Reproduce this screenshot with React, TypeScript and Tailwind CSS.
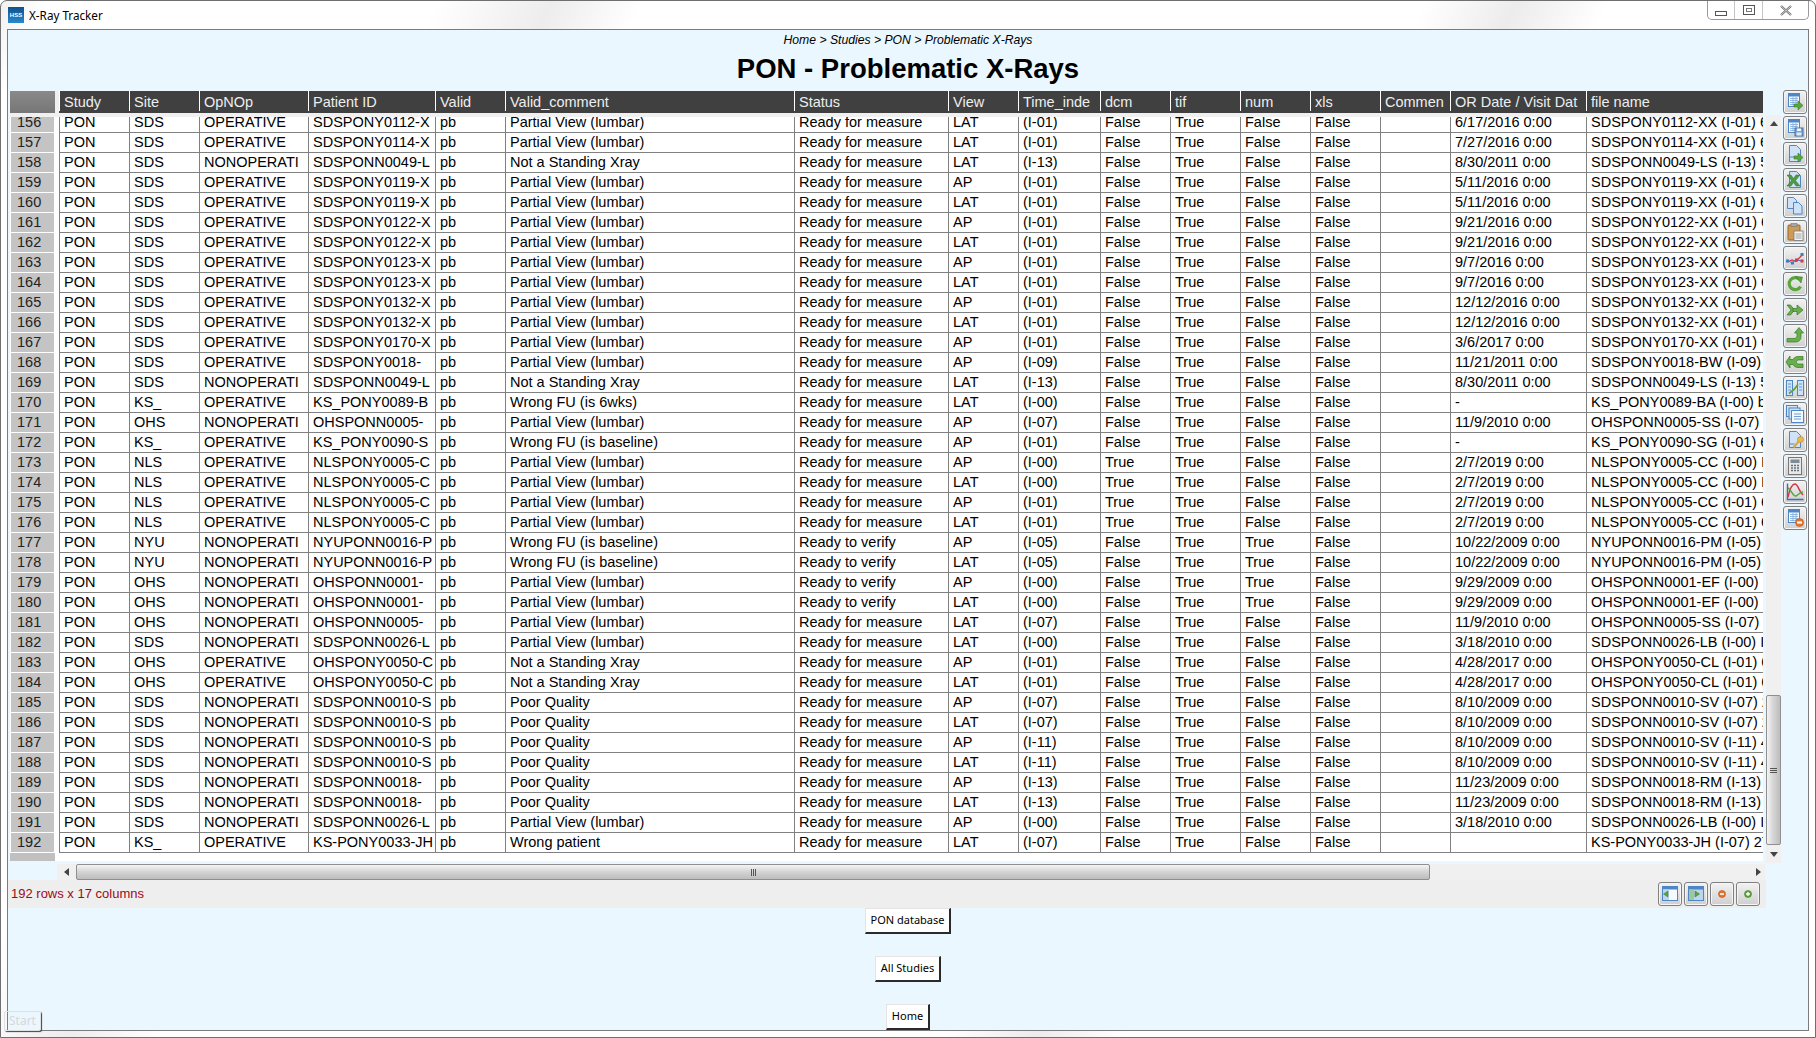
import React from "react";

const ARIAL = { fontFamily: '"Liberation Sans", Arial, sans-serif' };

const columns = [
  { label: "Study", width: "w-[70px]" },
  { label: "Site", width: "w-[70px]" },
  { label: "OpNOp", width: "w-[109px]" },
  { label: "Patient ID", width: "w-[127px]" },
  { label: "Valid", width: "w-[70px]" },
  { label: "Valid_comment", width: "w-[289px]" },
  { label: "Status", width: "w-[154px]" },
  { label: "View", width: "w-[70px]" },
  { label: "Time_inde", width: "w-[82px]" },
  { label: "dcm", width: "w-[70px]" },
  { label: "tif", width: "w-[70px]" },
  { label: "num", width: "w-[70px]" },
  { label: "xls", width: "w-[70px]" },
  { label: "Commen", width: "w-[70px]" },
  { label: "OR Date / Visit Dat", width: "w-[136px]" },
  { label: "file name", width: "w-[177px]" },
];

const PV = "Partial View (lumbar)";
const NS = "Not a Standing Xray";
const BL = "Wrong FU (is baseline)";
const PQ = "Poor Quality";
const RM = "Ready for measure";
const RV = "Ready to verify";
const OP = "OPERATIVE";
const NO = "NONOPERATI";

// site, opnop, patient, comment, status, view, time, dcm, num, date, file
const data: string[][] = [
  ["SDS", OP, "SDSPONY0112-X", PV, RM, "LAT", "(I-01)", "False", "False", "6/17/2016 0:00", "SDSPONY0112-XX (I-01) 6"],
  ["SDS", OP, "SDSPONY0114-X", PV, RM, "LAT", "(I-01)", "False", "False", "7/27/2016 0:00", "SDSPONY0114-XX (I-01) 6"],
  ["SDS", NO, "SDSPONN0049-L", NS, RM, "LAT", "(I-13)", "False", "False", "8/30/2011 0:00", "SDSPONN0049-LS (I-13) 5"],
  ["SDS", OP, "SDSPONY0119-X", PV, RM, "AP", "(I-01)", "False", "False", "5/11/2016 0:00", "SDSPONY0119-XX (I-01) 6"],
  ["SDS", OP, "SDSPONY0119-X", PV, RM, "LAT", "(I-01)", "False", "False", "5/11/2016 0:00", "SDSPONY0119-XX (I-01) 6"],
  ["SDS", OP, "SDSPONY0122-X", PV, RM, "AP", "(I-01)", "False", "False", "9/21/2016 0:00", "SDSPONY0122-XX (I-01) 6"],
  ["SDS", OP, "SDSPONY0122-X", PV, RM, "LAT", "(I-01)", "False", "False", "9/21/2016 0:00", "SDSPONY0122-XX (I-01) 6"],
  ["SDS", OP, "SDSPONY0123-X", PV, RM, "AP", "(I-01)", "False", "False", "9/7/2016 0:00", "SDSPONY0123-XX (I-01) 6"],
  ["SDS", OP, "SDSPONY0123-X", PV, RM, "LAT", "(I-01)", "False", "False", "9/7/2016 0:00", "SDSPONY0123-XX (I-01) 6"],
  ["SDS", OP, "SDSPONY0132-X", PV, RM, "AP", "(I-01)", "False", "False", "12/12/2016 0:00", "SDSPONY0132-XX (I-01) 6"],
  ["SDS", OP, "SDSPONY0132-X", PV, RM, "LAT", "(I-01)", "False", "False", "12/12/2016 0:00", "SDSPONY0132-XX (I-01) 6"],
  ["SDS", OP, "SDSPONY0170-X", PV, RM, "AP", "(I-01)", "False", "False", "3/6/2017 0:00", "SDSPONY0170-XX (I-01) 6"],
  ["SDS", OP, "SDSPONY0018-", PV, RM, "AP", "(I-09)", "False", "False", "11/21/2011 0:00", "SDSPONY0018-BW (I-09)"],
  ["SDS", NO, "SDSPONN0049-L", NS, RM, "LAT", "(I-13)", "False", "False", "8/30/2011 0:00", "SDSPONN0049-LS (I-13) 5"],
  ["KS_", OP, "KS_PONY0089-B", "Wrong FU (is 6wks)", RM, "LAT", "(I-00)", "False", "False", "-", "KS_PONY0089-BA (I-00) b"],
  ["OHS", NO, "OHSPONN0005-", PV, RM, "AP", "(I-07)", "False", "False", "11/9/2010 0:00", "OHSPONN0005-SS (I-07)"],
  ["KS_", OP, "KS_PONY0090-S", BL, RM, "AP", "(I-01)", "False", "False", "-", "KS_PONY0090-SG (I-01) 6"],
  ["NLS", OP, "NLSPONY0005-C", PV, RM, "AP", "(I-00)", "True", "False", "2/7/2019 0:00", "NLSPONY0005-CC (I-00) I"],
  ["NLS", OP, "NLSPONY0005-C", PV, RM, "LAT", "(I-00)", "True", "False", "2/7/2019 0:00", "NLSPONY0005-CC (I-00) I"],
  ["NLS", OP, "NLSPONY0005-C", PV, RM, "AP", "(I-01)", "True", "False", "2/7/2019 0:00", "NLSPONY0005-CC (I-01) 6"],
  ["NLS", OP, "NLSPONY0005-C", PV, RM, "LAT", "(I-01)", "True", "False", "2/7/2019 0:00", "NLSPONY0005-CC (I-01) 6"],
  ["NYU", NO, "NYUPONN0016-P", BL, RV, "AP", "(I-05)", "False", "True", "10/22/2009 0:00", "NYUPONN0016-PM (I-05)"],
  ["NYU", NO, "NYUPONN0016-P", BL, RV, "LAT", "(I-05)", "False", "True", "10/22/2009 0:00", "NYUPONN0016-PM (I-05)"],
  ["OHS", NO, "OHSPONN0001-", PV, RV, "AP", "(I-00)", "False", "True", "9/29/2009 0:00", "OHSPONN0001-EF (I-00)"],
  ["OHS", NO, "OHSPONN0001-", PV, RV, "LAT", "(I-00)", "False", "True", "9/29/2009 0:00", "OHSPONN0001-EF (I-00)"],
  ["OHS", NO, "OHSPONN0005-", PV, RM, "LAT", "(I-07)", "False", "False", "11/9/2010 0:00", "OHSPONN0005-SS (I-07)"],
  ["SDS", NO, "SDSPONN0026-L", PV, RM, "LAT", "(I-00)", "False", "False", "3/18/2010 0:00", "SDSPONN0026-LB (I-00) I"],
  ["OHS", OP, "OHSPONY0050-C", NS, RM, "AP", "(I-01)", "False", "False", "4/28/2017 0:00", "OHSPONY0050-CL (I-01) 6"],
  ["OHS", OP, "OHSPONY0050-C", NS, RM, "LAT", "(I-01)", "False", "False", "4/28/2017 0:00", "OHSPONY0050-CL (I-01) 6"],
  ["SDS", NO, "SDSPONN0010-S", PQ, RM, "AP", "(I-07)", "False", "False", "8/10/2009 0:00", "SDSPONN0010-SV (I-07) 2"],
  ["SDS", NO, "SDSPONN0010-S", PQ, RM, "LAT", "(I-07)", "False", "False", "8/10/2009 0:00", "SDSPONN0010-SV (I-07) 2"],
  ["SDS", NO, "SDSPONN0010-S", PQ, RM, "AP", "(I-11)", "False", "False", "8/10/2009 0:00", "SDSPONN0010-SV (I-11) 4"],
  ["SDS", NO, "SDSPONN0010-S", PQ, RM, "LAT", "(I-11)", "False", "False", "8/10/2009 0:00", "SDSPONN0010-SV (I-11) 4"],
  ["SDS", NO, "SDSPONN0018-", PQ, RM, "AP", "(I-13)", "False", "False", "11/23/2009 0:00", "SDSPONN0018-RM (I-13)"],
  ["SDS", NO, "SDSPONN0018-", PQ, RM, "LAT", "(I-13)", "False", "False", "11/23/2009 0:00", "SDSPONN0018-RM (I-13)"],
  ["SDS", NO, "SDSPONN0026-L", PV, RM, "AP", "(I-00)", "False", "False", "3/18/2010 0:00", "SDSPONN0026-LB (I-00) I"],
  ["KS_", OP, "KS-PONY0033-JH", "Wrong patient", RM, "LAT", "(I-07)", "False", "False", "", "KS-PONY0033-JH (I-07) 2Y"],
];

const BLUE = "#4f86c6";
const PALE = "#cfe2f7";
const GREEN = "#5aa53c";
const DKGREEN = "#357a25";

function Sheet() {
  return (
    <>
      <rect x="3.5" y="1.5" width="11" height="13" fill="#f4f8fc" stroke={BLUE} />
      <rect x="4" y="2" width="10" height="2.5" fill={BLUE} />
      <path d="M5 6.5h8M5 8.5h8M5 10.5h8M5 12.5h8M8 5v8.5M11 5v8.5" stroke="#7fa9d8" strokeWidth="0.8" />
    </>
  );
}

function Page() {
  return <path d="M4.5 1.5h7l4 4v12h-11z" fill={PALE} stroke={BLUE} />;
}

function Arrow() {
  return <path d="M9 12h4V9l5 4.5-5 4.5v-3H9z" fill={GREEN} stroke={DKGREEN} strokeWidth="0.6" />;
}

const toolbarIcons: React.ReactNode[] = [
  <><Sheet /><Arrow /></>,
  <>
    <Sheet />
    <rect x="10" y="10" width="8" height="8" fill="#7aa4d2" stroke="#47709f" />
    <rect x="12" y="10.5" width="4" height="2.5" fill="#eef4fb" />
    <rect x="11.5" y="14.5" width="5" height="3" fill="#dfe9f4" />
  </>,
  <><Page /><path d="M4.5 13h5" stroke={BLUE} /><Arrow /></>,
  <>
    <Page />
    <path d="M2 5h4l2.5 3.5L11 5h4l-4.5 5.5L15 16h-4l-2.5-3.5L6 16H2l4.5-5.5z" fill="#4e9a47" stroke="#2f6e2c" strokeWidth="0.5" />
  </>,
  <>
    <path d="M2.5 1.5h6l3 3v8h-9z" fill={PALE} stroke={BLUE} />
    <path d="M8.5 6.5h5l3.5 3.5v8H8.5z" fill={PALE} stroke={BLUE} />
  </>,
  <>
    <rect x="3" y="3" width="12" height="15" rx="1" fill="#cf9a55" stroke="#96662a" />
    <rect x="6" y="1.5" width="6" height="3" fill="#a8a8a8" stroke="#777" strokeWidth="0.6" />
    <rect x="9" y="9" width="9" height="9.5" fill="#f5f5f5" stroke="#777" strokeWidth="0.8" />
    <path d="M10.5 12h6M10.5 14h6M10.5 16h6" stroke="#888" strokeWidth="0.8" />
  </>,
  <>
    <path d="M2 14l5-2 4 1.5L18 6" stroke="#d8344a" strokeWidth="1.3" fill="none" />
    <path d="M2 12l5 3 4-3 7 1" stroke="#3f7cc4" strokeWidth="1" fill="none" />
    <rect x="1" y="11.5" width="3" height="3" fill="#3f7cc4" />
    <rect x="6" y="13.5" width="3" height="3" fill="#3f7cc4" />
    <rect x="10" y="10.5" width="3" height="3" fill="#d8344a" />
    <rect x="15.5" y="5" width="3" height="3" fill="#3f7cc4" />
    <rect x="15.5" y="11.5" width="3" height="3" fill="#d8344a" />
  </>,
  <>
    <path d="M14.5 5.5A6 6 0 1 0 15.5 12.5" fill="none" stroke={GREEN} strokeWidth="3.2" />
    <path d="M10.5 2.5l7 .5-1.5 6z" fill={GREEN} stroke={DKGREEN} strokeWidth="0.5" />
  </>,
  <>
    <path d="M2 5h3.500l4 5-4 5H2l4-5z" fill="#68ae4b" stroke={DKGREEN} strokeWidth="0.7" />
    <path d="M8 8.500h4V5l6 5-6 5v-3.500H8z" fill="#68ae4b" stroke={DKGREEN} strokeWidth="0.7" />
  </>,
  <>
    <path d="M2 16v-3.500h7c2 0 3-1 3-3V7H9.500L14 1.500 18.500 7H16v3c0 4-2 6-6 6z" fill="#68ae4b" stroke={DKGREEN} strokeWidth="0.7" />
  </>,
  <>
    <path d="M18 4.500h-5c-2 0-4 1-5 3H5V4L1 10l4 6v-3.500h3c1 2 3 3 5 3h5V12h-4.500c-1 0-2-1-2-2s1-2 2-2H18z" fill="#68ae4b" stroke={DKGREEN} strokeWidth="0.7" />
  </>,
  <>
    <rect x="1.5" y="2.5" width="6" height="15" fill={PALE} stroke={BLUE} />
    <rect x="12.5" y="2.5" width="6" height="15" fill={PALE} stroke={BLUE} />
    <path d="M3 6h3M3 9h3M3 12h3M14 6h3M14 9h3M14 12h3" stroke={BLUE} strokeWidth="0.8" />
    <path d="M4 15.500l5-4 4-5" stroke={GREEN} strokeWidth="1.8" fill="none" />
  </>,
  <>
    <rect x="1.5" y="1.5" width="11" height="11" fill={PALE} stroke={BLUE} />
    <rect x="4" y="4" width="11" height="11" fill={PALE} stroke={BLUE} />
    <rect x="6.5" y="6.5" width="12" height="12" fill="#f4f8fc" stroke={BLUE} />
    <path d="M9 10h7M9 12.500h7M9 15h7" stroke={BLUE} strokeWidth="0.8" />
  </>,
  <>
    <Page />
    <path d="M4.500 14h5" stroke={BLUE} />
    <circle cx="15.5" cy="9.5" r="3" fill="#eab84c" stroke="#b5842a" strokeWidth="0.6" />
    <path d="M14 11l-5.500 6.500" stroke="#dba83f" strokeWidth="2.2" />
  </>,
  <>
    <rect x="3.5" y="1.5" width="13" height="17" fill="#e8e8e8" stroke="#777" />
    <rect x="5.5" y="3.5" width="9" height="3.5" fill="#7e8a98" />
    <path d="M6 9.500h2M9 9.500h2M12 9.500h2M6 12h2M9 12h2M12 12h2M6 14.500h2M9 14.500h2M12 14.500h2" stroke="#66707c" strokeWidth="1.4" />
  </>,
  <>
    <path d="M2.500 1.500v16h16" fill="none" stroke="#3f6fb0" strokeWidth="1.4" />
    <path d="M3 15c2-9 4-13 7-13 3 0 4 8 8 11" fill="none" stroke="#d8344a" strokeWidth="1.5" />
    <path d="M3 6c3 1 5 9 8 8 2-1 4-4 7-4" fill="none" stroke={GREEN} strokeWidth="1.5" />
  </>,
  <>
    <Sheet />
    <circle cx="14.5" cy="14.5" r="4" fill="#e8752c" stroke="#b64f14" strokeWidth="0.6" />
    <rect x="12" y="13.5" width="5" height="2" fill="#fff" />
  </>,
];

const pagerIcons: React.ReactNode[] = [
  <>
    <rect x="2.5" y="2.5" width="15" height="14" fill="#f6fafe" stroke={BLUE} />
    <rect x="3" y="3" width="14" height="2.5" fill={BLUE} />
    <rect x="3" y="5.5" width="6" height="10.5" fill="#bcd5ef" />
    <path d="M8 7v6L3.500 10z" fill={GREEN} stroke={DKGREEN} strokeWidth="0.5" />
  </>,
  <>
    <rect x="2.5" y="2.5" width="15" height="14" fill="#bcd5ef" stroke={BLUE} />
    <rect x="3" y="3" width="14" height="2.5" fill={BLUE} />
    <rect x="3" y="5.5" width="5" height="10.5" fill="#9cc89a" />
    <path d="M9 7v6l4.500-3z" fill={GREEN} stroke={DKGREEN} strokeWidth="0.5" />
  </>,
  <>
    <circle cx="10" cy="10" r="3.5" fill="#e8752c" stroke="#b64f14" strokeWidth="0.6" />
    <rect x="8" y="9.3" width="4" height="1.5" fill="#fff" />
  </>,
  <>
    <circle cx="10" cy="10" r="3.5" fill="#5aa53c" stroke="#3d7f2a" strokeWidth="0.6" />
    <path d="M8 10h4M10 8v4" stroke="#fff" strokeWidth="1.3" />
  </>,
];

function ToolButton({ children }: { children: React.ReactNode }) {
  return (
    <div className="flex h-[24px] w-[24px] items-center justify-center rounded-[3px] border border-[#7f7f7f] bg-gradient-to-b from-[#f2f2f2] to-[#cfcfcf] shadow-[inset_0_0_0_1px_#f6f6f6]">
      <svg width="20" height="20" viewBox="0 0 20 20">
        {children}
      </svg>
    </div>
  );
}

function NavButton({ label, width }: { label: string; width: string }) {
  return (
    <div
      className={`${width} flex h-[26px] items-center justify-center border-t border-l border-[#e4e4e4] border-r-2 border-b-2 border-r-[#2a2a2a] border-b-[#2a2a2a] bg-white text-[11px] text-black`}
      style={{ fontFamily: '"Noto Sans", sans-serif' }}
    >
      {label}
    </div>
  );
}

function Grip({ vertical }: { vertical?: boolean }) {
  return (
    <div className={`flex gap-[1px] ${vertical ? "flex-col" : ""}`}>
      {[0, 1, 2].map((i) => (
        <div key={i} className={vertical ? "h-px w-[7px] bg-[#555]" : "h-[7px] w-px bg-[#555]"} />
      ))}
    </div>
  );
}

function DataTable() {
  return (
    <div className="h-[774px] pl-[2px] pt-px">
      <div className="flex h-[22px]">
        <div className="h-[22px] w-[45px] bg-gradient-to-b from-[#8a8a8a] to-[#767676]" />
        <div className="h-[22px] w-[4px] bg-[#f0f0f0]" />
        <div className="flex h-[22px] w-[1704px] bg-[#404040]">
          {columns.map((c) => (
            <div
              key={c.label}
              className={`${c.width} h-[20px] overflow-hidden whitespace-nowrap border-l border-white pl-[4px] text-[14.5px] leading-[22px] text-[#eeeeee]`}
            >
              {c.label}
            </div>
          ))}
        </div>
      </div>
      <div className="h-[4px] w-[1753px] bg-[#f0f0f0]" />
      <div className="h-[744px] w-[1753px] overflow-hidden bg-white">
        <div className="-mt-[4px] flex">
          <div className="w-[45px]">
            {data.map((_, i) => (
              <div
                key={i}
                className="h-[20px] border-x border-b border-white bg-[#c4c4c4] pl-[6px] text-[14.5px] leading-[19px] text-[#222]"
              >
                {156 + i}
              </div>
            ))}
            <div className="h-[8px] bg-[#c0c0c0]" />
          </div>
          <div className="ml-[4px] w-[1704px]">
            {data.map((row, i) => {
              const [site, op, patient, comment, status, view, time, dcm, num, date, file] = row;
              const cells = ["PON", site, op, patient, "pb", comment, status, view, time, dcm, "True", num, "False", "", date, file];
              return (
                <div key={i} className="flex h-[20px] border-b border-[#808080]">
                  {cells.map((text, j) => (
                    <div
                      key={j}
                      className={`${columns[j].width} overflow-hidden whitespace-nowrap border-l border-[#808080] pl-[4px] text-[14.5px] leading-[19px] text-black`}
                    >
                      {text}
                    </div>
                  ))}
                </div>
              );
            })}
          </div>
        </div>
      </div>
    </div>
  );
}

export default function App() {
  return (
    <div
      className="relative h-[1038px] w-[1816px] overflow-hidden rounded-t-[7px] border border-[#6f6f6f] bg-[linear-gradient(115deg,#f1f1f1_0%,#ffffff_2%,#ffffff_19%,#ededed_24%,#ffffff_28%,#ffffff_62%,#ececec_66%,#ffffff_70%,#ffffff_100%)]"
      style={ARIAL}
    >
      <div className="flex h-[28px] justify-between">
        <div className="flex items-start pl-[7px] pt-[6px]">
          <div className="flex h-[16px] w-[16px] items-center justify-center bg-gradient-to-b from-[#0f4f8e] to-[#2a8ac9] text-[6px] font-bold leading-none text-white">
            HSS
          </div>
          <span className="ml-[5px] text-[11.7px] leading-[16px] text-black" style={{ fontFamily: '"Noto Sans", sans-serif' }}>
            X-Ray Tracker
          </span>
        </div>
        <div className="mr-[6px] flex h-[19px] w-[102px] rounded-b-[5px] border-x border-b border-[#9a9a9a] bg-white">
          <div className="flex w-[27px] items-end justify-center border-r border-[#c4c4c4] pb-[3px]">
            <div className="h-[5px] w-[12px] border border-[#555] bg-white" />
          </div>
          <div className="flex w-[28px] items-center justify-center border-r border-[#c4c4c4]">
            <div className="flex h-[10px] w-[12px] items-center justify-center border border-[#555]">
              <div className="h-[4px] w-[6px] border border-[#777]" />
            </div>
          </div>
          <div className="flex flex-1 items-center justify-center">
            <svg width="12" height="11" viewBox="0 0 12 11">
              <path d="M1 1l10 9M11 1L1 10" stroke="#6a6a6a" strokeWidth="2.2" />
              <path d="M1 1l10 9M11 1L1 10" stroke="#e8e8e8" strokeWidth="0.8" />
            </svg>
          </div>
        </div>
      </div>

      <div className="ml-[6px] flex h-[1002px] w-[1802px] flex-col border border-[#7b7b7b] bg-[#ebf7fe]">
        <div className="h-[20px] text-center text-[12.2px] italic leading-[21px] text-black">
          Home &gt; Studies &gt; PON &gt; Problematic X-Rays
        </div>
        <div className="h-[40px] text-center text-[27.5px] font-bold leading-[38px] text-black">
          PON - Problematic X-Rays
        </div>

        <div className="flex h-[818px]">
          <div className="w-[1758px]">
            <DataTable />
            <div className="ml-[49px] flex h-[16px] w-[1708px] items-center bg-[#f0f0f0]">
              <div className="flex w-[19px] justify-center">
                <div className="h-0 w-0 border-y-[4px] border-r-[5px] border-y-transparent border-r-[#444]" />
              </div>
              <div className="flex h-[16px] w-[1354px] items-center justify-center rounded-[2px] border border-[#8f8f8f] bg-gradient-to-b from-[#f4f4f4] via-[#d4d4d4] to-[#bdbdbd]">
                <Grip />
              </div>
              <div className="flex flex-1 justify-end pr-[4px]">
                <div className="h-0 w-0 border-y-[4px] border-l-[5px] border-y-transparent border-l-[#444]" />
              </div>
            </div>
            <div className="flex h-[28px] items-center justify-between bg-[#eeeeee] pl-[3px] pr-[6px]">
              <span className="text-[13px] text-[#9b0a1a]">192 rows x 17 columns</span>
              <div className="flex gap-[2px]">
                {pagerIcons.map((icon, i) => (
                  <ToolButton key={i}>{icon}</ToolButton>
                ))}
              </div>
            </div>
          </div>

          <div className="mt-[25px] flex h-[748px] w-[15px] flex-col items-center bg-[#f0f0f0]">
            <div className="flex h-[16px] items-center">
              <div className="h-0 w-0 border-x-[4px] border-b-[5px] border-x-transparent border-b-[#444]" />
            </div>
            <div className="mt-[564px] flex h-[150px] w-[15px] items-center justify-center rounded-[2px] border border-[#8f8f8f] bg-gradient-to-r from-[#f4f4f4] via-[#d4d4d4] to-[#bdbdbd]">
              <Grip vertical />
            </div>
            <div className="flex flex-1 items-center">
              <div className="h-0 w-0 border-x-[4px] border-t-[5px] border-x-transparent border-t-[#444]" />
            </div>
          </div>

          <div className="ml-[2px] flex flex-col gap-[2px]">
            {toolbarIcons.map((icon, i) => (
              <ToolButton key={i}>{icon}</ToolButton>
            ))}
          </div>
        </div>

        <div className="flex flex-col items-center gap-[22px]">
          <NavButton label="PON database" width="w-[86px]" />
          <NavButton label="All Studies" width="w-[66px]" />
          <NavButton label="Home" width="w-[44px]" />
        </div>
      </div>

      <div className="absolute left-[3px] top-[1010px] flex h-[20px] w-[37px] items-center justify-center rounded-[2px] border border-[#e0e0e0] text-[12px] text-[#d8d8d8] shadow-[1px_1px_1px_#444]" style={{ fontFamily: '"Noto Sans", sans-serif' }}>
        Start
      </div>
    </div>
  );
}
